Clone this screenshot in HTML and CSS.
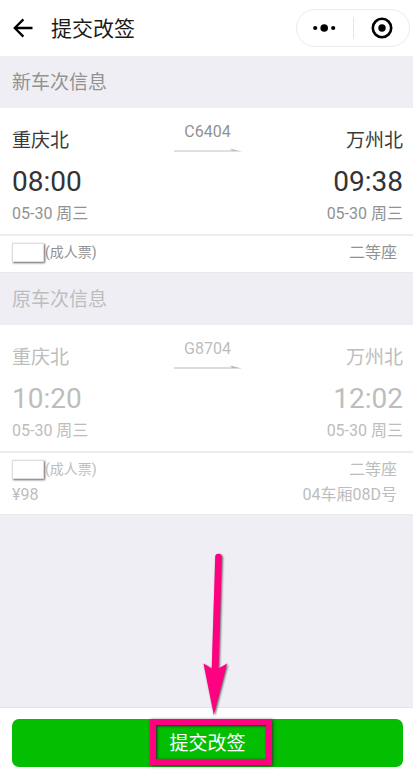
FILE: index.html
```html
<!DOCTYPE html>
<html lang="zh-CN">
<head>
<meta charset="utf-8">
<meta name="viewport" content="width=device-width, initial-scale=1">
<title>提交改签</title>
<link rel="stylesheet" href="styles.css">
</head>
<body>
<header class="navbar">
  <button class="icon-button back" type="button" aria-label="返回">
    <svg width="20" height="20" viewBox="0 0 20 20" fill="none" stroke="#000" stroke-width="2.3"><path d="M19.500 10H2M10.4 1.4 1.8 10l8.6 8.6"/></svg>
  </button>
  <h1 class="navbar-title">提交改签</h1>
  <div class="capsule">
    <button class="icon-button" type="button" aria-label="更多">
      <svg width="24" height="24" viewBox="0 0 24 24"><circle cx="2.200" cy="12" r="2.1"/><circle cx="11.200" cy="12" r="3.8"/><circle cx="20.200" cy="12" r="2.1"/></svg>
    </button>
    <button class="icon-button" type="button" aria-label="关闭">
      <svg width="24" height="24" viewBox="0 0 24 24"><circle cx="13" cy="12" r="9.2" fill="none" stroke="#000" stroke-width="2.6"/><circle cx="13" cy="12" r="3.7"/></svg>
    </button>
  </div>
</header>

<main class="content">
  <section>
    <h2 class="section-title">新车次信息</h2>
    <div class="ticket">
      <div class="journey">
        <div class="stop">
          <span class="station">重庆北</span>
          <time class="clock">08:00</time>
          <span class="date">05-30 周三</span>
        </div>
        <div class="train">
          <span>C6404</span>
          <svg width="68" height="4" viewBox="0 0 68 4"><path d="M0 2.4H58L56 0.4 68 3.4H0Z" fill="#c2c2b8"/></svg>
        </div>
        <div class="stop stop-end">
          <span class="station">万州北</span>
          <time class="clock">09:38</time>
          <span class="date">05-30 周三</span>
        </div>
      </div>
      <div class="passenger">
        <div class="row"><span class="name"><span class="mask"></span>(成人票)</span><span>二等座</span></div>
      </div>
    </div>
  </section>

  <section class="original">
    <h2 class="section-title">原车次信息</h2>
    <div class="ticket">
      <div class="journey">
        <div class="stop">
          <span class="station">重庆北</span>
          <time class="clock">10:20</time>
          <span class="date">05-30 周三</span>
        </div>
        <div class="train">
          <span>G8704</span>
          <svg width="68" height="4" viewBox="0 0 68 4"><path d="M0 2.4H58L56 0.4 68 3.4H0Z" fill="#b9b7b3"/></svg>
        </div>
        <div class="stop stop-end">
          <span class="station">万州北</span>
          <time class="clock">12:02</time>
          <span class="date">05-30 周三</span>
        </div>
      </div>
      <div class="passenger">
        <div class="row"><span class="name"><span class="mask"></span>(成人票)</span><span>二等座</span></div>
        <div class="row"><span>¥98</span><span>04车厢08D号</span></div>
      </div>
    </div>
  </section>
</main>

<footer class="footer">
  <button class="submit" type="button">提交改签<span class="highlight"></span></button>
  <svg class="pointer" width="32" height="172" viewBox="0 0 32 172"><path d="M16.200 7a3.300 3.300 0 0 1 6.600 0L19.500 118.500 28 113.500 14.800 165 4.500 113.500 12.700 118.500Z" fill="#ff0080"/></svg>
</footer>
</body>
</html>
```
FILE: styles.css
```css
* {
  box-sizing: border-box;
}

body {
  display: flex;
  flex-direction: column;
  min-height: 100vh;
  margin: 0;
  background: #efeef4;
  color: #929292;
  font-family: Roboto, "Noto Sans CJK SC", sans-serif;
  font-size: 16px;
}

button {
  padding: 0;
  border: 0;
  background: none;
  font: inherit;
  cursor: pointer;
}

h1,
h2 {
  margin: 0;
  font-weight: 400;
}

svg {
  display: block;
}

.navbar {
  display: flex;
  align-items: center;
  height: 56px;
  padding: 0 3px 0 13px;
  background: #fff;
}

.navbar-title {
  flex: 1;
  margin-left: 18px;
  padding-top: 2px;
  color: #1a1a1a;
  font-size: 21px;
  line-height: 32px;
}

.capsule {
  display: flex;
  width: 114px;
  height: 38px;
  border: 1px solid #ebebeb;
  border-radius: 19px;
}

.capsule .icon-button {
  display: flex;
  flex: 1;
  align-items: center;
  justify-content: center;
  position: relative;
}

.capsule .icon-button + .icon-button::before {
  content: "";
  position: absolute;
  left: 0;
  height: 22px;
  border-left: 1px solid #e6e6e6;
}

.content {
  flex: 1;
}

.section-title {
  padding: 2px 12px 0;
  font-size: 19px;
  line-height: 50px;
}

.ticket {
  border-bottom: 1px solid #e9e9ec;
  background: #fff;
}

.journey {
  display: grid;
  grid-template-columns: 1fr auto 1fr;
  padding: 12px 10px 8px 12px;
  border-bottom: 2px solid #ededed;
}

.stop {
  display: flex;
  flex-direction: column;
}

.stop-end {
  text-align: right;
}

.station {
  color: #3a3a3a;
  font-size: 19px;
  line-height: 42px;
}

.clock {
  color: #333;
  font-size: 28px;
  line-height: 40px;
}

.date {
  line-height: 24px;
}

.train {
  display: flex;
  flex-direction: column;
  align-items: center;
  gap: 4px;
  line-height: 24px;
}

.passenger {
  padding: 4px 16px 7px 12px;
}

.row {
  display: flex;
  justify-content: space-between;
  line-height: 25px;
}

.name {
  display: flex;
  align-items: center;
  gap: 1px;
  font-size: 14px;
}

.mask {
  width: 32px;
  height: 19px;
  border: 1px solid #ddd;
  background: #fff;
  box-shadow: 1px 1px 2px #666;
}

.original,
.original .station,
.original .clock {
  color: #bdbdbd;
}

.footer {
  position: relative;
  padding: 11px 10px 5px 12px;
  border-top: 1px solid #e3e3e6;
  background: #fff;
}

.submit {
  display: block;
  position: relative;
  width: 100%;
  height: 48px;
  padding-bottom: 4px;
  border-radius: 7px;
  background: #04be02;
  color: #fff;
  font-size: 19px;
}

.highlight {
  position: absolute;
  top: 0;
  left: calc(50% - 58px);
  width: 122px;
  height: 46px;
  border: 6px solid #ff0080;
  box-shadow: 1px 1px 3px #333, inset 1px 1px 3px #222;
}

.pointer {
  position: absolute;
  bottom: 50px;
  left: calc(50% - 8px);
  filter: drop-shadow(1px 1px 1px #555);
}
```
